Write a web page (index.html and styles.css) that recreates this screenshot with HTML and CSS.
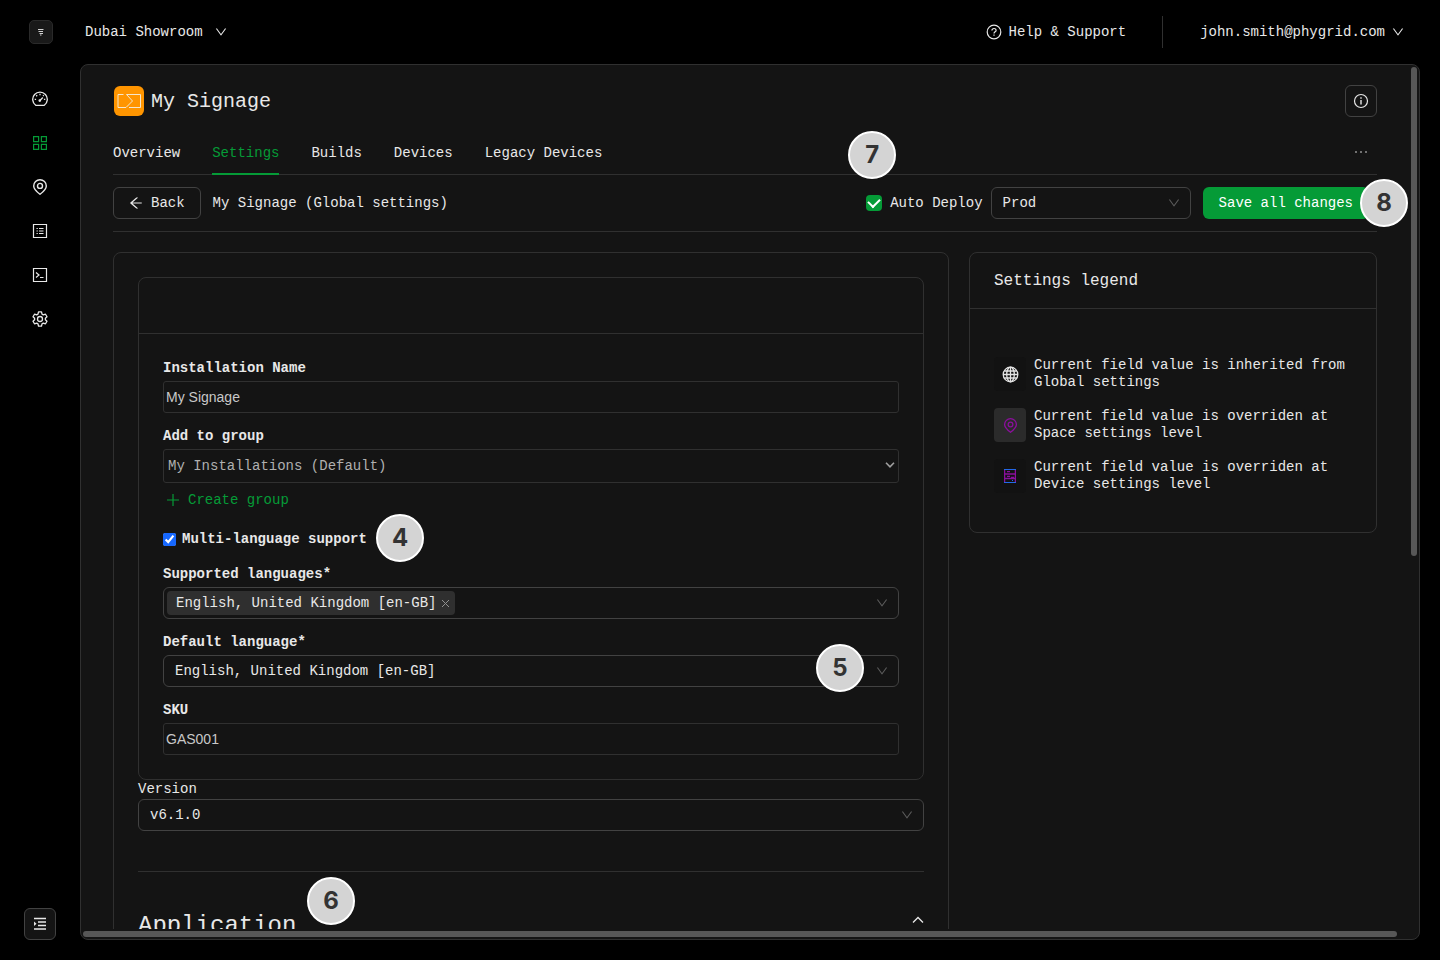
FILE: index.html
```
<!DOCTYPE html>
<html lang="en">
<head>
    <meta charset="UTF-8">
    <meta name="viewport" content="width=device-width, initial-scale=1.0">
    <title>My Signage - Settings</title>
    <link rel="stylesheet" href="styles.css">
</head>
<body>
    <!-- shared icons -->
    <svg width="0" height="0" class="sprite">
        <symbol id="down" viewBox="64 64 896 896">
            <path d="M884 256h-75c-5.1 0-9.9 2.5-12.9 6.6L512 654.2 227.9 262.6c-3-4.1-7.8-6.6-12.9-6.6h-75c-6.5 0-10.3 7.4-6.5 12.7l352.6 486.1c12.8 17.6 39 17.6 51.7 0l352.6-486.1c3.9-5.3.1-12.7-6.4-12.7z"/>
        </symbol>
        <symbol id="pin" viewBox="0 0 16 16">
            <path d="M8 15.300C4 12.200 1.700 9.500 1.700 6.900a6.300 6.200 0 0 1 12.600 0C14.300 9.500 12 12.200 8 15.300z" fill="none" stroke="currentColor" stroke-width="1.400"/>
            <circle cx="8" cy="6.900" r="2.500" fill="none" stroke="currentColor" stroke-width="1.400"/>
        </symbol>
    </svg>

    <header class="topbar">
        <a href="#" class="logo" aria-label="Home">
            <svg width="24" height="24" viewBox="0 0 24 24" fill="none" stroke="#d0d0d0">
                <path d="M9 9.500h5.500M9.500 11.500h4.500M10.500 13.500h3.500M11 15h1.500"/>
            </svg>
        </a>
        <button class="plain-btn">Dubai Showroom <svg class="icon-down"><use href="#down"/></svg></button>
        <a href="#" class="help">
            <svg width="16" height="16" viewBox="0 0 16 16" fill="none" stroke="currentColor" stroke-width="1.200">
                <circle cx="8" cy="8" r="6.800"/>
                <path d="M5.900 6.600c0-1.300.9-2.100 2.100-2.100s2.100.8 2.100 1.900c0 1.400-2.100 1.500-2.100 3.100M8 10.600v1.200"/>
            </svg>
            Help &amp; Support
        </a>
        <span class="separator"></span>
        <button class="plain-btn account">john.smith@phygrid.com <svg class="icon-down"><use href="#down"/></svg></button>
    </header>

    <div class="layout">
        <nav class="sidebar">
            <a href="#" aria-label="Dashboard">
                <svg width="16" height="16" viewBox="0 0 16 16" fill="none" stroke="currentColor" stroke-width="1.300">
                    <path d="M3.700 14.300A7.300 7.300 0 1 1 12.300 14.300z" stroke-linejoin="round"/>
                    <path d="M8 9.500l2.800-3M8 2.800v1.400M4.200 4.300l1 1M11 5l.8-.8M2.700 8.300h1.400M11.900 8.300h1.400"/>
                    <circle cx="7.800" cy="9.600" r=".7"/>
                </svg>
            </a>
            <a href="#" class="active" aria-label="Installations">
                <svg width="16" height="16" viewBox="0 0 16 16" fill="none" stroke="currentColor" stroke-width="1.200">
                    <path d="M1.600 1.600h5v5h-5zM9.400 1.600h5v5h-5zM1.600 9.400h5v5h-5zM9.400 9.400h5v5h-5z"/>
                </svg>
            </a>
            <a href="#" aria-label="Spaces"><svg width="16" height="16"><use href="#pin"/></svg></a>
            <a href="#" aria-label="Reports">
                <svg width="16" height="16" viewBox="0 0 16 16" fill="none" stroke="currentColor" stroke-width="1.200">
                    <path d="M1.500 1.500h13v13h-13z"/>
                    <path d="M4.500 5.500h1.300M4.500 8h1.300M4.500 10.500h1.300M7 5.500h4.500M7 8h4.500M7 10.500h4.500"/>
                </svg>
            </a>
            <a href="#" aria-label="Console">
                <svg width="16" height="16" viewBox="0 0 16 16" fill="none" stroke="currentColor" stroke-width="1.200">
                    <path d="M1.500 1.500h13v13h-13zM4 5.500l3 2.500-3 2.500M8 10.500h3.500"/>
                </svg>
            </a>
            <a href="#" aria-label="Settings">
                <svg width="16" height="16" viewBox="0 0 16 16" fill="none" stroke="currentColor" stroke-width="1.300" stroke-linejoin="round">
                    <path d="M6.500 .9h3l.5 2.200 1.300.8 2.200-.7 1.500 2.600L13.400 7.300v1.400l1.600 1.500-1.500 2.600-2.200-.7-1.300.8-.5 2.200h-3L6 12.900l-1.300-.8-2.200.7L1 10.200l1.600-1.500V7.300L1 5.800l1.500-2.600 2.200.7L6 3.100z"/>
                    <circle cx="8" cy="8" r="2.500"/>
                </svg>
            </a>
            <button class="icon-btn expand" aria-label="Expand menu">
                <svg width="14" height="14" viewBox="0 0 14 14" fill="none" stroke="currentColor" stroke-width="1.300">
                    <path d="M1 1.500h12M5 5h8M5 8.500h8M1 12h12"/>
                    <path d="M1 4.500v4.500L3.500 6.800z" fill="currentColor" stroke="none"/>
                </svg>
            </button>
        </nav>

        <main class="panel">
            <div class="scroll-area">
                <div class="title-row">
                    <svg class="app-icon" width="30" height="30" viewBox="0 0 30 30" fill="none" stroke="#f5e6cc">
                        <rect width="30" height="30" rx="6" fill="#ff9500" stroke="none"/>
                        <path d="M9.500 8.500h-5.500v13h8l6.500-6.500-6-6.500h14v13h-11.500"/>
                    </svg>
                    <h1>My Signage</h1>
                    <button class="icon-btn info" aria-label="Info">
                        <svg width="16" height="16" viewBox="0 0 16 16" fill="none" stroke="currentColor" stroke-width="1.200">
                            <circle cx="8" cy="8" r="6.500"/>
                            <path d="M8 4.300v1.400M8 7v4.500" stroke-width="1.400"/>
                        </svg>
                    </button>
                </div>

                <div class="tabs">
                    <a href="#">Overview</a>
                    <a href="#" class="active">Settings</a>
                    <a href="#">Builds</a>
                    <a href="#">Devices</a>
                    <a href="#">Legacy Devices</a>
                    <button class="plain-btn more" aria-label="More">
                        <svg width="12" height="12" viewBox="0 0 12 12" fill="currentColor"><circle cx="1" cy="6" r=".8"/><circle cx="6" cy="6" r=".8"/><circle cx="11" cy="6" r=".8"/></svg>
                    </button>
                </div>

                <div class="actions">
                    <button class="back-btn">
                        <svg width="14" height="14" viewBox="64 64 896 896" fill="currentColor"><path d="M872 474H286.900l350.200-304c5.600-4.900 2.200-14-5.200-14h-88.500c-3.900 0-7.600 1.400-10.500 3.900L155 487.800a31.960 31.960 0 0 0 0 48.300L535.100 866c1.500 1.300 3.300 2 5.200 2h91.500c7.400 0 10.800-9.200 5.200-14L286.900 550H872c4.400 0 8-3.600 8-8v-60c0-4.400-3.600-8-8-8z"/></svg>
                        Back
                    </button>
                    <span>My Signage (Global settings)</span>
                    <label class="auto-deploy"><input type="checkbox" checked> Auto Deploy<span class="badge badge-7">7</span></label>
                    <div class="select env">
                        <select aria-label="Environment"><option>Prod</option></select>
                        <svg class="icon-down"><use href="#down"/></svg>
                    </div>
                    <div class="save">
                        <button class="save-btn">Save all changes</button>
                        <span class="badge badge-8">8</span>
                    </div>
                </div>

                <div class="columns">
                    <section class="card settings">
                        <div class="card">
                            <div class="card-head"></div>
                            <form class="card-body">
                                <label class="field-label" for="name">Installation Name</label>
                                <input class="text-input" id="name" type="text" value="My Signage">

                                <label class="field-label" for="group">Add to group</label>
                                <div class="select group">
                                    <select id="group"><option>My Installations (Default)</option></select>
                                    <svg width="10" height="6" viewBox="0 0 10 6" fill="none" stroke="#a0a0a0" stroke-width="1.600"><path d="M1 .8l4 4 4-4"/></svg>
                                </div>
                                <button type="button" class="plain-btn create">
                                    <svg width="14" height="14" viewBox="0 0 14 14" fill="none" stroke="currentColor" stroke-width="1.200"><path d="M7 1v12M1 7h12"/></svg>
                                    Create group
                                </button>

                                <div class="multi">
                                    <input type="checkbox" id="multi" checked>
                                    <label for="multi">Multi-language support</label>
                                    <span class="badge badge-4">4</span>
                                </div>

                                <label class="field-label" for="languages">Supported languages*</label>
                                <div class="select tags">
                                    <span class="tag">English, United Kingdom [en-GB]
                                        <button type="button" aria-label="Remove"><svg width="9" height="9" viewBox="0 0 9 9" fill="none" stroke="#909090"><path d="M1 1l7 7M8 1L1 8"/></svg></button>
                                    </span>
                                    <input type="text" id="languages">
                                    <svg class="icon-down"><use href="#down"/></svg>
                                </div>

                                <label class="field-label" for="default">Default language*</label>
                                <div class="select">
                                    <select id="default"><option>English, United Kingdom [en-GB]</option></select>
                                    <svg class="icon-down"><use href="#down"/></svg>
                                    <span class="badge badge-5">5</span>
                                </div>

                                <label class="field-label" for="sku">SKU</label>
                                <input class="text-input" id="sku" type="text" value="GAS001">
                            </form>
                        </div>

                        <label class="version-label" for="version">Version</label>
                        <div class="select">
                            <select id="version"><option>v6.1.0</option></select>
                            <svg class="icon-down"><use href="#down"/></svg>
                        </div>

                        <div class="section-head">
                            <h2>Application</h2>
                            <span class="badge badge-6">6</span>
                            <button class="plain-btn" aria-label="Collapse">
                                <svg width="12" height="8" viewBox="0 0 12 8" fill="none" stroke="currentColor" stroke-width="1.300"><path d="M1 6.500l5-5 5 5"/></svg>
                            </button>
                        </div>
                    </section>

                    <aside class="card legend">
                        <h3 class="card-head">Settings legend</h3>
                        <ul>
                            <li>
                                <span class="legend-icon">
                                    <svg width="17" height="17" viewBox="0 0 17 17" fill="none" stroke="#e4e4e4" stroke-width="1.300">
                                        <circle cx="8.500" cy="8.500" r="7.300"/>
                                        <ellipse cx="8.500" cy="8.500" rx="3.800" ry="7.300"/>
                                        <path d="M8.500 1v15M1 8.500h15M2.300 5h12.400M2.300 12h12.400"/>
                                    </svg>
                                </span>
                                Current field value is inherited from Global settings
                            </li>
                            <li>
                                <span class="legend-icon space"><svg width="15" height="15"><use href="#pin"/></svg></span>
                                Current field value is overriden at Space settings level
                            </li>
                            <li>
                                <span class="legend-icon">
                                    <svg width="12" height="14" viewBox="0 0 12 14" fill="none" stroke="#8b0f9c" stroke-width="1.300">
                                        <path d="M.6 0v14M11.400 0v14M1 5h10M1 9.500h10M3 2.700h3M3 7.300h3M7 8.500h3"/>
                                        <path d="M0 .5h12M0 13.500h12M8 11.500h1" stroke="#2468e8" stroke-width="1"/>
                                    </svg>
                                </span>
                                Current field value is overriden at Device settings level
                            </li>
                        </ul>
                    </aside>
                </div>
            </div>
            <div class="scrollbar-y"></div>
            <div class="scrollbar-x"></div>
        </main>
    </div>
</body>
</html>
```
FILE: styles.css
```
* {
    box-sizing: border-box;
}
body {
    margin: 0;
    height: 100vh;
    display: flex;
    flex-direction: column;
    overflow: hidden;
    background: #000;
    color: #e8e8e8;
    font-family: "Liberation Mono", monospace;
    font-size: 14px;
    line-height: 20px;
}
a {
    color: inherit;
    text-decoration: none;
}
button, select, input {
    font: inherit;
    color: inherit;
}
button {
    cursor: pointer;
}
h1, h2, h3, ul {
    margin: 0;
    padding: 0;
    font-weight: normal;
}
svg {
    display: block;
    flex: none;
}
.sprite {
    position: absolute;
}
.icon-down {
    width: 12px;
    height: 12px;
    fill: currentColor;
}
.plain-btn {
    display: flex;
    align-items: center;
    padding: 0;
    border: 0;
    background: none;
}

/* top bar */
.topbar {
    display: flex;
    align-items: center;
    height: 64px;
    padding: 0 36px 0 29px;
}
.topbar .plain-btn {
    gap: 12px;
}
.topbar .account {
    gap: 7px;
}
.logo {
    margin-right: 32px;
    background: #191919;
    border: 1px solid #2a2a2a;
    border-radius: 5px;
    width: 24px;
    height: 24px;
}
.logo svg {
    margin: -1px;
}
.help {
    display: flex;
    align-items: center;
    gap: 7px;
    margin-left: auto;
}
.separator {
    width: 1px;
    height: 32px;
    margin: 0 37px 0 36px;
    background: #303030;
}

.layout {
    flex: 1;
    min-height: 0;
    display: flex;
    padding: 0 20px 20px 0;
}

/* sidebar */
.sidebar {
    width: 80px;
    display: flex;
    flex-direction: column;
    align-items: center;
    gap: 28px;
    padding-top: 27px;
}
.sidebar .active {
    color: #059b37;
}
.icon-btn {
    display: flex;
    align-items: center;
    justify-content: center;
    width: 32px;
    height: 32px;
    padding: 0;
    background: #141414;
    border: 1px solid #424242;
    border-radius: 6px;
}
.expand {
    margin-top: auto;
}

/* main panel */
.panel {
    position: relative;
    flex: 1;
    min-width: 0;
    padding-bottom: 10px;
    background: #141414;
    border: 1px solid #303030;
    border-radius: 8px;
}
.scroll-area {
    height: 100%;
    padding: 20px 42px 0 32px;
    overflow: hidden;
}
.scrollbar-y, .scrollbar-x {
    position: absolute;
    background: #575757;
    border-radius: 3px;
}
.scrollbar-y {
    top: 2px;
    right: 2px;
    width: 6px;
    height: 56%;
}
.scrollbar-x {
    left: 2px;
    right: 22px;
    bottom: 2px;
    height: 6px;
}

.title-row {
    display: flex;
    align-items: center;
    gap: 7px;
    padding-left: 1px;
}
h1 {
    font-size: 20px;
    line-height: 34px;
    height: 32px;
}
.info {
    margin-left: auto;
}

.tabs {
    display: flex;
    gap: 32px;
    height: 58px;
    padding-top: 12px;
    border-bottom: 1px solid #303030;
}
.tabs a {
    height: 46px;
    padding: 14px 0 0;
}
.tabs .active {
    color: #059b37;
    border-bottom: 2px solid #059b37;
}
.more {
    margin: 0 10px 0 auto;
}

.actions {
    display: flex;
    align-items: center;
    padding: 12px 8px 12px 0;
    border-bottom: 1px solid #303030;
}
.back-btn {
    display: flex;
    align-items: center;
    gap: 8px;
    height: 32px;
    margin-right: 12px;
    padding: 0 15px;
    background: #141414;
    border: 1px solid #424242;
    border-radius: 6px;
}
.auto-deploy {
    position: relative;
    display: flex;
    align-items: center;
    gap: 8px;
    margin: 0 8px 0 auto;
}
.auto-deploy input {
    appearance: none;
    display: flex;
    align-items: center;
    justify-content: center;
    width: 16px;
    height: 16px;
    margin: 0;
    background: #059b37;
    border-radius: 4px;
}
.auto-deploy input::after {
    content: "";
    width: 6px;
    height: 9px;
    margin-bottom: 3px;
    border: solid #fff;
    border-width: 0 2px 2px 0;
    transform: rotate(45deg);
}
.env {
    width: 200px;
    margin-right: 12px;
}
.save {
    position: relative;
}
.save-btn {
    display: block;
    height: 32px;
    padding: 0 16px;
    background: #059b37;
    color: #fff;
    border: 0;
    border-radius: 6px;
}

/* numbered markers */
.badge {
    position: absolute;
    z-index: 1;
    width: 48px;
    height: 48px;
    border: 2px solid #fff;
    border-radius: 50%;
    background: #d4d4d4;
    color: #333;
    font: bold 24px/44px Inter, "Liberation Sans", sans-serif;
    text-align: center;
}
.badge-7 {
    left: -18px;
    bottom: 34px;
}
.badge-8 {
    right: -39px;
    top: -8px;
}
.badge-4 {
    left: 213px;
    top: -15px;
}
.badge-5 {
    right: 35px;
    top: -11px;
}
.badge-6 {
    left: 169px;
    top: 5px;
}

/* cards */
.columns {
    display: grid;
    grid-template-columns: minmax(0, 1fr) 408px;
    align-items: start;
    gap: 20px;
    margin-top: 20px;
}
.card {
    border: 1px solid #303030;
    border-radius: 8px;
}
.settings {
    padding: 24px 24px 48px;
}
.card-head {
    height: 56px;
    padding: 0 24px;
    border-bottom: 1px solid #303030;
    font-size: 16px;
    line-height: 56px;
}
.card-body {
    padding: 24px;
}

/* fields */
.field-label {
    display: block;
    margin: 13px 0 3px;
    font-weight: bold;
}
.field-label:first-child {
    margin-top: 0;
}
.text-input {
    display: block;
    width: 100%;
    height: 32px;
    padding: 0 2px;
    background: #141414;
    border: 1px solid #303030;
    border-radius: 3px;
    color: #c8c8c8;
    font-family: "Liberation Sans", sans-serif;
}
.select {
    position: relative;
}
.select select {
    appearance: none;
    display: block;
    width: 100%;
    height: 32px;
    padding: 0 11px;
    background: #141414;
    border: 1px solid #424242;
    border-radius: 6px;
}
.select > svg {
    position: absolute;
    right: 11px;
    top: 10px;
    color: #5c5c5c;
    pointer-events: none;
}
.group select {
    height: 34px;
    padding: 0 4px;
    border-color: #303030;
    border-radius: 3px;
    color: #b0b0b0;
}
.group > svg {
    top: 13px;
    right: 4px;
}
.create {
    gap: 8px;
    margin: 7px 0 0 3px;
    color: #059b37;
}
.multi {
    position: relative;
    display: flex;
    align-items: center;
    gap: 6px;
    margin: 19px 0 15px;
    font-weight: bold;
}
.multi input {
    width: 13px;
    height: 13px;
    margin: 0;
    accent-color: #1668ff;
}
.tags {
    display: flex;
    align-items: center;
    height: 32px;
    padding: 0 3px;
    border: 1px solid #424242;
    border-radius: 6px;
}
.tags > svg {
    top: 9px;
    right: 10px;
}
.tags input {
    flex: 1;
    min-width: 0;
    border: 0;
    background: none;
}
.tag {
    display: flex;
    align-items: center;
    gap: 5px;
    height: 24px;
    padding: 0 5px 0 9px;
    background: #2f2f2f;
    border-radius: 4px;
}
.tag button {
    padding: 0;
    border: 0;
    background: none;
}
.version-label {
    display: block;
    line-height: 19px;
}
.section-head {
    position: relative;
    display: flex;
    align-items: center;
    justify-content: space-between;
    margin-top: 40px;
    padding-top: 32px;
    border-top: 1px solid #303030;
}
h2 {
    font-size: 24px;
    line-height: 44px;
}
.section-head .plain-btn {
    height: 32px;
    align-self: flex-start;
}

/* legend */
.legend ul {
    display: flex;
    flex-direction: column;
    gap: 17px;
    padding: 48px 24px 39px;
    list-style: none;
}
.legend li {
    display: flex;
    gap: 8px;
    line-height: 17px;
}
.legend-icon {
    flex: none;
    display: flex;
    align-items: center;
    justify-content: center;
    width: 32px;
    height: 34px;
    border-radius: 4px;
    background: #121212;
}
.legend-icon.space {
    background: #2b2b2b;
    color: #8b0f9c;
}
```
